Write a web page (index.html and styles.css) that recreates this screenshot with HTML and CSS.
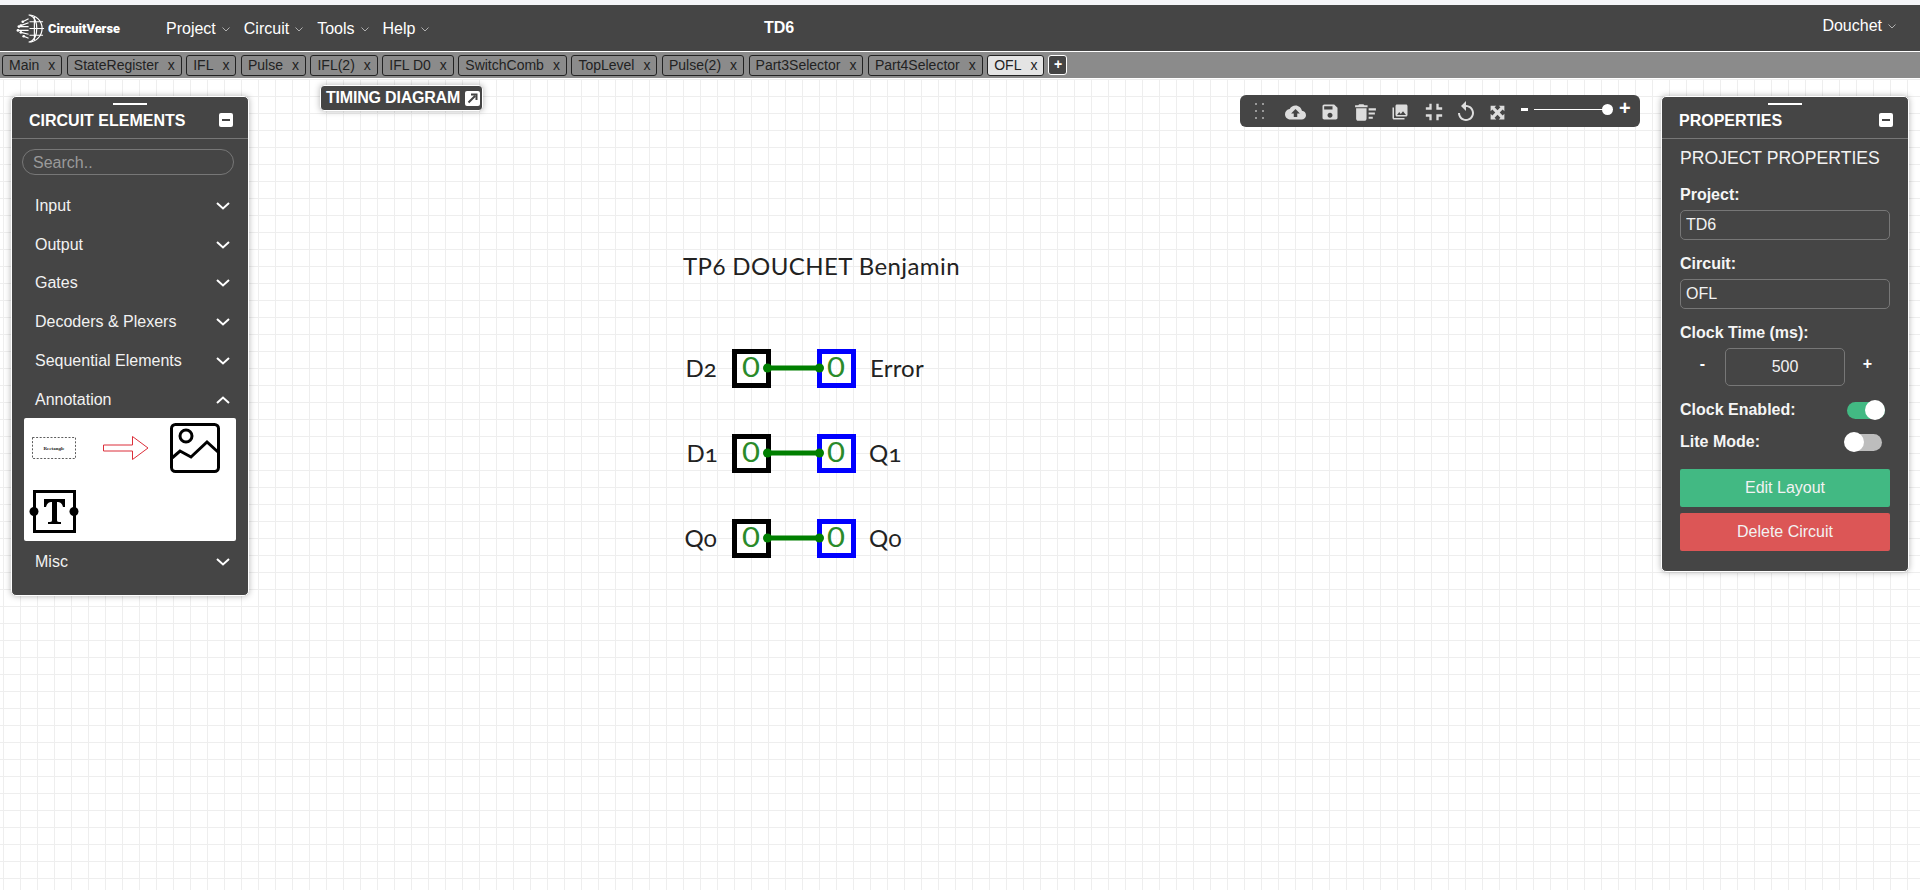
FILE: index.html
```html
<!DOCTYPE html>
<html lang="en">
<head>
    <meta charset="UTF-8">
    <meta name="viewport" content="width=device-width, initial-scale=1.0">
    <title>TD6 - CircuitVerse</title>
    <link rel="stylesheet" href="styles.css">
</head>
<body>
    <div class="top-strip"></div>

    <nav class="navbar">
        <div class="logo">
            <svg class="logo-globe" viewBox="0 0 30 32" fill="none" stroke="#fff" stroke-width="1.2">
                <path d="M13 2 A14 14 0 1 1 13 30"/>
                <path d="M14 2 C24 6 24 26 14 30 M19 4 V28 M14 9 H28 M14 16 H29 M14 23 H28"/>
                <path d="M13 6 L7 9 M13 10 L5 13 M13 14 H3 M13 18 H2 M13 22 L5 20 M13 26 L8 24"/>
                <g fill="#fff" stroke="none">
                    <circle cx="7" cy="9" r="1.4"/><circle cx="5" cy="13" r="1.4"/><circle cx="3" cy="14" r="1.4"/>
                    <circle cx="2" cy="18" r="1.4"/><circle cx="5" cy="20" r="1.4"/><circle cx="8" cy="24" r="1.4"/>
                </g>
            </svg>
            <span class="logo-text">CircuitVerse</span>
        </div>
        <ul class="menu">
            <li>Project<svg class="caret" viewBox="0 0 8 5"><path d="M.5 .5 L4 4 L7.5 .5"/></svg></li>
            <li>Circuit<svg class="caret" viewBox="0 0 8 5"><path d="M.5 .5 L4 4 L7.5 .5"/></svg></li>
            <li>Tools<svg class="caret" viewBox="0 0 8 5"><path d="M.5 .5 L4 4 L7.5 .5"/></svg></li>
            <li>Help<svg class="caret" viewBox="0 0 8 5"><path d="M.5 .5 L4 4 L7.5 .5"/></svg></li>
        </ul>
        <div class="project-name">TD6</div>
        <div class="user">Douchet<svg class="caret" viewBox="0 0 8 5"><path d="M.5 .5 L4 4 L7.5 .5"/></svg></div>
    </nav>

    <div class="tabbar">
        <div class="tab">Main<span class="tab-x">x</span></div>
        <div class="tab">StateRegister<span class="tab-x">x</span></div>
        <div class="tab">IFL<span class="tab-x">x</span></div>
        <div class="tab">Pulse<span class="tab-x">x</span></div>
        <div class="tab">IFL(2)<span class="tab-x">x</span></div>
        <div class="tab">IFL D0<span class="tab-x">x</span></div>
        <div class="tab">SwitchComb<span class="tab-x">x</span></div>
        <div class="tab">TopLevel<span class="tab-x">x</span></div>
        <div class="tab">Pulse(2)<span class="tab-x">x</span></div>
        <div class="tab">Part3Selector<span class="tab-x">x</span></div>
        <div class="tab">Part4Selector<span class="tab-x">x</span></div>
        <div class="tab active">OFL<span class="tab-x">x</span></div>
        <div class="tab-add">+</div>
    </div>

    <main class="canvas">
        <!-- circuit drawn on the grid -->
        <svg class="circuit" viewBox="670 240 300 320">
            <text class="label title" x="683" y="275">TP6 DOUCHET Benjamin</text>

            <g>
                <text class="label end" x="717" y="377">D2</text>
                <rect class="node-in" x="734.5" y="351.5" width="34" height="34"/>
                <rect class="node-out" x="819.5" y="351.5" width="34" height="34"/>
                <text class="zero" x="751" y="377" textLength="18" lengthAdjust="spacingAndGlyphs">0</text>
                <text class="zero" x="836" y="377" textLength="18" lengthAdjust="spacingAndGlyphs">0</text>
                <path class="wire" d="M767 368 H819"/>
                <circle class="pin" cx="767.5" cy="368" r="4.5"/>
                <circle class="pin" cx="819.5" cy="368" r="4.5"/>
                <text class="label" x="870" y="377">Error</text>
            </g>
            <g>
                <text class="label end" x="718" y="462">D1</text>
                <rect class="node-in" x="734.5" y="436.5" width="34" height="34"/>
                <rect class="node-out" x="819.5" y="436.5" width="34" height="34"/>
                <text class="zero" x="751" y="462" textLength="18" lengthAdjust="spacingAndGlyphs">0</text>
                <text class="zero" x="836" y="462" textLength="18" lengthAdjust="spacingAndGlyphs">0</text>
                <path class="wire" d="M767 453 H819"/>
                <circle class="pin" cx="767.5" cy="453" r="4.5"/>
                <circle class="pin" cx="819.5" cy="453" r="4.5"/>
                <text class="label" x="869" y="462">Q1</text>
            </g>
            <g>
                <text class="label end" x="717" y="547">Q0</text>
                <rect class="node-in" x="734.5" y="521.5" width="34" height="34"/>
                <rect class="node-out" x="819.5" y="521.5" width="34" height="34"/>
                <text class="zero" x="751" y="547" textLength="18" lengthAdjust="spacingAndGlyphs">0</text>
                <text class="zero" x="836" y="547" textLength="18" lengthAdjust="spacingAndGlyphs">0</text>
                <path class="wire" d="M767 538 H819"/>
                <circle class="pin" cx="767.5" cy="538" r="4.5"/>
                <circle class="pin" cx="819.5" cy="538" r="4.5"/>
                <text class="label" x="869" y="547">Q0</text>
            </g>
        </svg>

        <aside class="panel panel-elements">
            <div class="panel-head">
                <span class="drag-bar"></span>
                <span class="panel-title">CIRCUIT ELEMENTS</span>
                <span class="minimize"></span>
            </div>
            <input class="search" placeholder="Search..">
            <div class="acc-row">Input<svg class="chev" viewBox="0 0 14 8"><path d="M1 1 L7 6.5 L13 1"/></svg></div>
            <div class="acc-row">Output<svg class="chev" viewBox="0 0 14 8"><path d="M1 1 L7 6.5 L13 1"/></svg></div>
            <div class="acc-row">Gates<svg class="chev" viewBox="0 0 14 8"><path d="M1 1 L7 6.5 L13 1"/></svg></div>
            <div class="acc-row">Decoders &amp; Plexers<svg class="chev" viewBox="0 0 14 8"><path d="M1 1 L7 6.5 L13 1"/></svg></div>
            <div class="acc-row">Sequential Elements<svg class="chev" viewBox="0 0 14 8"><path d="M1 1 L7 6.5 L13 1"/></svg></div>
            <div class="acc-row">Annotation<svg class="chev" viewBox="0 0 14 8"><path d="M1 7 L7 1.5 L13 7"/></svg></div>
            <div class="acc-content">
                <svg class="element" viewBox="0 0 50 50">
                    <rect x="3.5" y="14.5" width="43" height="21" fill="none" stroke="#333" stroke-width=".8" stroke-dasharray="2 1.6"/>
                    <text class="rect-text" x="25" y="26.5">Rectangle</text>
                </svg>
                <svg class="element" viewBox="0 0 50 50">
                    <path d="M3.5 22 H32.500 V13.500 L48 25 L32.500 36.500 V28 H3.500 Z" fill="#fff" stroke="#dc2f3a" stroke-width="1"/>
                </svg>
                <svg class="element" viewBox="0 0 50 50" fill="none" stroke="#000" stroke-width="3">
                    <rect x="1.500" y="1.500" width="47" height="47" rx="4"/>
                    <circle cx="16" cy="13" r="6"/>
                    <path d="M2 35 L10 28 L21 34 L37 19 L48 29"/>
                </svg>
                <svg class="element" viewBox="0 0 50 50">
                    <rect x="5.500" y="5.500" width="40" height="40" fill="#fff" stroke="#000" stroke-width="3"/>
                    <path d="M15 13 H36 V21 H34 C33 17 31 16 28 16 V34 C28 36 29 36 32 36 V38 H19 V36 C22 36 23 36 23 34 V16 C20 16 18 17 17 21 H15 Z" fill="#000"/>
                    <circle cx="5" cy="25.500" r="4.500" fill="#000"/>
                    <circle cx="45" cy="25.500" r="4.500" fill="#000"/>
                </svg>
            </div>
            <div class="acc-row">Misc<svg class="chev" viewBox="0 0 14 8"><path d="M1 1 L7 6.5 L13 1"/></svg></div>
        </aside>

        <div class="timing">
            <span>TIMING DIAGRAM</span>
            <svg class="timing-icon" viewBox="0 0 15 15"><rect width="15" height="15" rx="2" fill="#fff"/><path d="M3.500 11.500 L10 5 M6 3.500 H11.500 V9" fill="none" stroke="#454545" stroke-width="2"/></svg>
        </div>

        <div class="toolbar">
            <svg class="tool-drag" viewBox="0 0 9 16"><g fill="#999"><rect x="0" y="0" width="2" height="2"/><rect x="7" y="0" width="2" height="2"/><rect x="0" y="7" width="2" height="2"/><rect x="7" y="7" width="2" height="2"/><rect x="0" y="14" width="2" height="2"/><rect x="7" y="14" width="2" height="2"/></g></svg>
            <span class="tool"><svg class="s21" viewBox="0 0 24 24"><path d="M19.35 10.04C18.67 6.59 15.64 4 12 4 9.11 4 6.6 5.64 5.35 8.04 2.34 8.36 0 10.91 0 14c0 3.31 2.69 6 6 6h13c2.76 0 5-2.24 5-5 0-2.64-2.05-4.78-4.65-4.96zM14 13v4h-4v-4H7l5-5 5 5h-3z"/></svg></span>
            <span class="tool"><svg class="s20" viewBox="0 0 24 24"><path d="M17 3H5c-1.110 0-2 .9-2 2v14c0 1.100.89 2 2 2h14c1.100 0 2-.9 2-2V7l-4-4zm-5 16c-1.660 0-3-1.340-3-3s1.340-3 3-3 3 1.340 3 3-1.340 3-3 3zm3-10H5V5h10v4z"/></svg></span>
            <span class="tool"><svg class="s25" viewBox="0 0 24 24"><path d="M15 16h4v2h-4zm0-8h7v2h-7zm0 4h6v2h-6zM3 18c0 1.100.9 2 2 2h6c1.100 0 2-.9 2-2V8H3v10zM14 5h-3l-1-1H6L5 5H2v2h12z"/></svg></span>
            <span class="tool"><svg class="s18" viewBox="0 0 24 24"><path d="M22 16V4c0-1.100-.9-2-2-2H8c-1.100 0-2 .9-2 2v12c0 1.100.9 2 2 2h12c1.100 0 2-.9 2-2zm-11-4l2.030 2.710L16 11l4 5H8l3-4zM2 6v14c0 1.100.9 2 2 2h14v-2H4V6H2z"/></svg></span>
            <span class="tool narrow"><svg class="s28" viewBox="0 0 24 24"><path d="M5 16h3v3h2v-5H5v2zm3-8H5v2h5V5H8v3zm6 11h2v-3h3v-2h-5v5zm2-11V5h-2v5h5V8h-3z"/></svg></span>
            <span class="tool narrow"><svg class="s24" viewBox="0 0 24 24"><path d="M12 5V1L7 6l5 5V7c3.310 0 6 2.690 6 6s-2.690 6-6 6-6-2.690-6-6H4c0 4.420 3.580 8 8 8s8-3.580 8-8-3.580-8-8-8z"/></svg></span>
            <span class="tool narrow"><svg class="s15" viewBox="0 0 24 24"><path d="M1 1h9L7.300 3.700 12 8.400l4.700-4.700L14 1h9v9l-2.700-2.700L15.600 12l4.700 4.700L23 14v9h-9l2.700-2.700L12 15.600l-4.700 4.700L10 23H1v-9l2.700 2.700L8.400 12 3.700 7.300 1 10z"/></svg></span>
            <span class="zoom-minus"></span>
            <span class="zoom-track"><span class="zoom-knob"></span></span>
            <span class="zoom-plus">+</span>
        </div>

        <aside class="panel panel-props">
            <div class="panel-head">
                <span class="drag-bar"></span>
                <span class="panel-title">PROPERTIES</span>
                <span class="minimize"></span>
            </div>
            <div class="props-body">
                <div class="props-title">PROJECT PROPERTIES</div>
                <label class="prop-label first">Project:</label>
                <input class="prop-input" value="TD6">
                <label class="prop-label">Circuit:</label>
                <input class="prop-input" value="OFL">
                <label class="prop-label">Clock Time (ms):</label>
                <div class="stepper">
                    <span class="step">-</span>
                    <input class="step-input" value="500">
                    <span class="step">+</span>
                </div>
                <div class="toggle-row clock-row">
                    <span class="prop-label-inline">Clock Enabled:</span>
                    <span class="toggle on"><span class="knob"></span></span>
                </div>
                <div class="toggle-row lite-row">
                    <span class="prop-label-inline">Lite Mode:</span>
                    <span class="toggle"><span class="knob"></span></span>
                </div>
                <button class="btn btn-green">Edit Layout</button>
                <button class="btn btn-red">Delete Circuit</button>
            </div>
        </aside>
    </main>
</body>
</html>
```

FILE: styles.css
```css
* {
    box-sizing: border-box;
}

html, body {
    height: 100%;
}

body {
    margin: 0;
    font-family: "Liberation Sans", Arial, sans-serif;
    font-size: 16px;
    display: flex;
    flex-direction: column;
    overflow: hidden;
    background: #fff;
}

.top-strip {
    height: 5px;
    background: #f4f5f8;
}

/* navbar */
.navbar {
    height: 46px;
    flex: none;
    background: #454545;
    color: #fff;
    display: flex;
    align-items: center;
    position: relative;
    padding-left: 16px;
}

.logo {
    width: 150px;
    display: flex;
    align-items: center;
    gap: 3px;
}

.logo-globe {
    width: 29px;
    height: 31px;
}

.logo-text {
    font-family: Roboto, sans-serif;
    font-weight: 900;
    font-size: 12.800px;
    white-space: nowrap;
}

.menu {
    list-style: none;
    margin: 2px 0 0;
    padding: 0;
    display: flex;
    gap: 14px;
}

.menu li {
    white-space: nowrap;
}

.caret {
    width: 8px;
    height: 5px;
    margin-left: 6px;
    fill: none;
    stroke: #ccc;
    stroke-width: .8;
    vertical-align: middle;
}

.project-name {
    position: absolute;
    left: 764px;
    font-weight: bold;
}

.user {
    margin-left: auto;
    margin-right: 24px;
    margin-top: -4px;
}

/* tabs */
.tabbar {
    height: 26px;
    flex: none;
    margin-top: 1px;
    background: #8b8b8b;
    display: flex;
    align-items: flex-start;
    gap: 4.500px;
    padding: 3px 0 0 2px;
}

.tab {
    height: 21px;
    line-height: 19px;
    padding: 0 6px;
    border: 1px solid #222;
    border-radius: 3px;
    font-size: 14px;
    color: #222;
    white-space: nowrap;
}

.tab-x {
    margin-left: 9px;
}

.tab.active {
    background: #e4e4e4;
}

.tab-add {
    width: 19px;
    height: 20px;
    line-height: 17px;
    text-align: center;
    background: #454545;
    border: 1px solid #fff;
    border-radius: 3px;
    color: #fff;
    font-weight: bold;
    font-size: 14px;
    margin-left: -.500px;
}

/* canvas */
.canvas {
    flex: 1;
    position: relative;
    margin-top: 1px;
    background-color: #fff;
    background-image:
        linear-gradient(to right, #eee 1px, transparent 1px),
        linear-gradient(to bottom, #eee 1px, transparent 1px);
    background-size: 17px 17px;
    background-position: 3px 0;
}

.circuit {
    position: absolute;
    left: 670px;
    top: 161px;
    width: 300px;
    height: 320px;
}

.label {
    font-family: Lato, sans-serif;
    font-size: 24px;
    fill: #222;
    letter-spacing: .2px;
    font-variant-numeric: oldstyle-nums;
}

.label.title {
    letter-spacing: .42px;
}

.label.end {
    text-anchor: end;
}

.zero {
    font-family: Lato, sans-serif;
    font-size: 27px;
    fill: #2a8a2a;
    text-anchor: middle;
}

.node-in,
.node-out {
    fill: #fff;
    fill-opacity: .6;
    stroke-width: 5;
}

.node-in {
    stroke: #000;
}

.node-out {
    stroke: #0000ff;
}

.wire {
    stroke: #007f00;
    stroke-width: 5;
    fill: none;
}

.pin {
    fill: #007f00;
}

/* floating panels */
.panel {
    position: absolute;
    top: 17px;
    background: #454545;
    border: 1px solid #fff;
    border-radius: 5px;
    box-shadow: 0 0 6px rgba(0, 0, 0, .3);
    color: #fff;
}

.panel-elements {
    left: 11px;
    width: 238px;
    height: 500px;
}

.panel-props {
    right: 11px;
    width: 248px;
}

.panel-head {
    height: 42px;
    border-bottom: 1px solid #777;
    display: flex;
    align-items: center;
    justify-content: space-between;
    padding: 5px 15px 0 17px;
    position: relative;
}

.drag-bar {
    position: absolute;
    top: 6px;
    left: 50%;
    width: 34px;
    height: 2px;
    margin-left: -17px;
    background: #fff;
}

.panel-title {
    font-weight: bold;
    padding-top: 2px;
}

.minimize {
    width: 14px;
    height: 14px;
    background: #fff;
    border-radius: 2px;
    position: relative;
}

.minimize::after {
    content: "";
    position: absolute;
    left: 3px;
    right: 3px;
    top: 6px;
    height: 2px;
    background: #454545;
}

.search {
    display: block;
    width: 212px;
    height: 26px;
    margin: 10px 0 10.500px 10px;
    padding: 1px 10px 0;
    border: 1px solid #777;
    border-radius: 13px;
    background: transparent;
    color: #fff;
    font: 16px "Liberation Sans", Arial, sans-serif;
}

.search::placeholder {
    color: #9a9a9a;
}

.acc-row {
    height: 38.800px;
    display: flex;
    align-items: center;
    justify-content: space-between;
    padding: 2px 18px 0 23px;
    color: #f2f2f2;
}

.chev {
    width: 14px;
    height: 8px;
    fill: none;
    stroke: #fff;
    stroke-width: 2;
}

.acc-content {
    width: 212px;
    height: 123px;
    margin: 0 0 0 12px;
    padding: 5px;
    background: #fff;
    border-radius: 2px;
    display: grid;
    grid-template-columns: repeat(3, 50px);
    grid-auto-rows: 50px;
    column-gap: 20.500px;
    row-gap: 13px;
}

.element {
    width: 50px;
    height: 50px;
}

.rect-text {
    font-family: "Liberation Serif", serif;
    font-weight: bold;
    font-size: 5px;
    text-anchor: middle;
    fill: #222;
}

/* timing diagram pill */
.timing {
    position: absolute;
    left: 320px;
    top: 6px;
    width: 163px;
    height: 26px;
    padding: 0 2px 0 5px;
    display: flex;
    align-items: center;
    justify-content: space-between;
    background: #454545;
    border: 1px solid #fff;
    border-radius: 4px;
    box-shadow: 0 0 6px rgba(0, 0, 0, .3);
    color: #fff;
    font-weight: bold;
    letter-spacing: -.2px;
}

.timing-icon {
    width: 15px;
    height: 15px;
}

/* toolbar */
.toolbar {
    position: absolute;
    left: 1240px;
    top: 16px;
    width: 400px;
    height: 32px;
    padding-left: 15px;
    display: flex;
    align-items: center;
    background: #454545;
    border-radius: 6px;
}

.tool-drag {
    width: 9px;
    height: 16px;
    margin-right: 13.500px;
}

.tool {
    width: 35px;
    height: 32px;
    flex: none;
    display: flex;
    align-items: center;
    justify-content: center;
    padding-top: 2px;
}

.tool.narrow {
    width: 32px;
}

.tool svg {
    fill: #ddd;
    flex: none;
}

.s15 { width: 15px; height: 15px; }
.s18 { width: 18px; height: 18px; }
.s20 { width: 20px; height: 20px; }
.s21 { width: 21px; height: 21px; }
.s24 { width: 24px; height: 24px; }
.s25 { width: 25px; height: 25px; }
.s28 { width: 28px; height: 28px; }

.zoom-minus {
    width: 7px;
    height: 3px;
    margin: -4px 0 0 7.500px;
    background: #fff;
}

.zoom-track {
    width: 79px;
    height: 1px;
    margin: -4px 0 0 6px;
    background: #fff;
    position: relative;
}

.zoom-knob {
    position: absolute;
    right: 0;
    top: -5px;
    width: 11px;
    height: 11px;
    border-radius: 50%;
    background: #fff;
}

.zoom-plus {
    margin: -7px 0 0 6px;
    color: #fff;
    font-size: 20px;
    font-weight: bold;
    line-height: 20px;
}

/* properties */
.props-body {
    padding: 0 18px 20px;
}

.props-title {
    height: 36px;
    line-height: 38px;
    font-size: 17.600px;
    color: #f2f2f2;
}

.prop-label {
    display: block;
    height: 20px;
    line-height: 22px;
    margin-top: 13px;
    margin-bottom: 6px;
    font-weight: bold;
    color: #f5f5f5;
}

.prop-label.first {
    margin-top: 9px;
}

.prop-input {
    display: block;
    width: 210px;
    height: 30px;
    padding: 0 5px;
    border: 1px solid #777;
    border-radius: 5px;
    background: transparent;
    color: #f2f2f2;
    font: 16px "Liberation Sans", Arial, sans-serif;
}

.stepper {
    display: flex;
    align-items: center;
    justify-content: space-between;
    height: 38px;
}

.step {
    width: 45px;
    text-align: center;
    font-weight: bold;
    margin-top: -6px;
}

.step-input {
    width: 120px;
    height: 38px;
    text-align: center;
    border: 1px solid #777;
    border-radius: 5px;
    background: transparent;
    color: #f2f2f2;
    font: 16px "Liberation Sans", Arial, sans-serif;
}

.toggle-row {
    height: 22px;
    display: flex;
    align-items: center;
    justify-content: space-between;
}

.prop-label-inline {
    font-weight: bold;
    color: #f5f5f5;
}

.clock-row {
    margin-top: 13px;
}

.lite-row {
    margin-top: 10px;
}

.toggle {
    height: 17px;
    border-radius: 9px;
    position: relative;
    display: block;
}

.clock-row .toggle {
    width: 38px;
    margin-right: 5px;
    background: #42b983;
}

.lite-row .toggle {
    width: 34px;
    margin-right: 8px;
    background: #bdbdbd;
}

.knob {
    position: absolute;
    top: -1.500px;
    width: 20px;
    height: 20px;
    border-radius: 50%;
    background: #fff;
}

.clock-row .knob {
    right: 0;
}

.lite-row .knob {
    left: -4px;
}

.btn {
    display: block;
    width: 210px;
    height: 38px;
    border: none;
    border-radius: 2px;
    color: #f2f2f2;
    font: 16px "Liberation Sans", Arial, sans-serif;
    margin-top: 6px;
}

.btn-green {
    margin-top: 16px;
    background: #42b983;
}

.btn-red {
    background: #dc5656;
}
```
